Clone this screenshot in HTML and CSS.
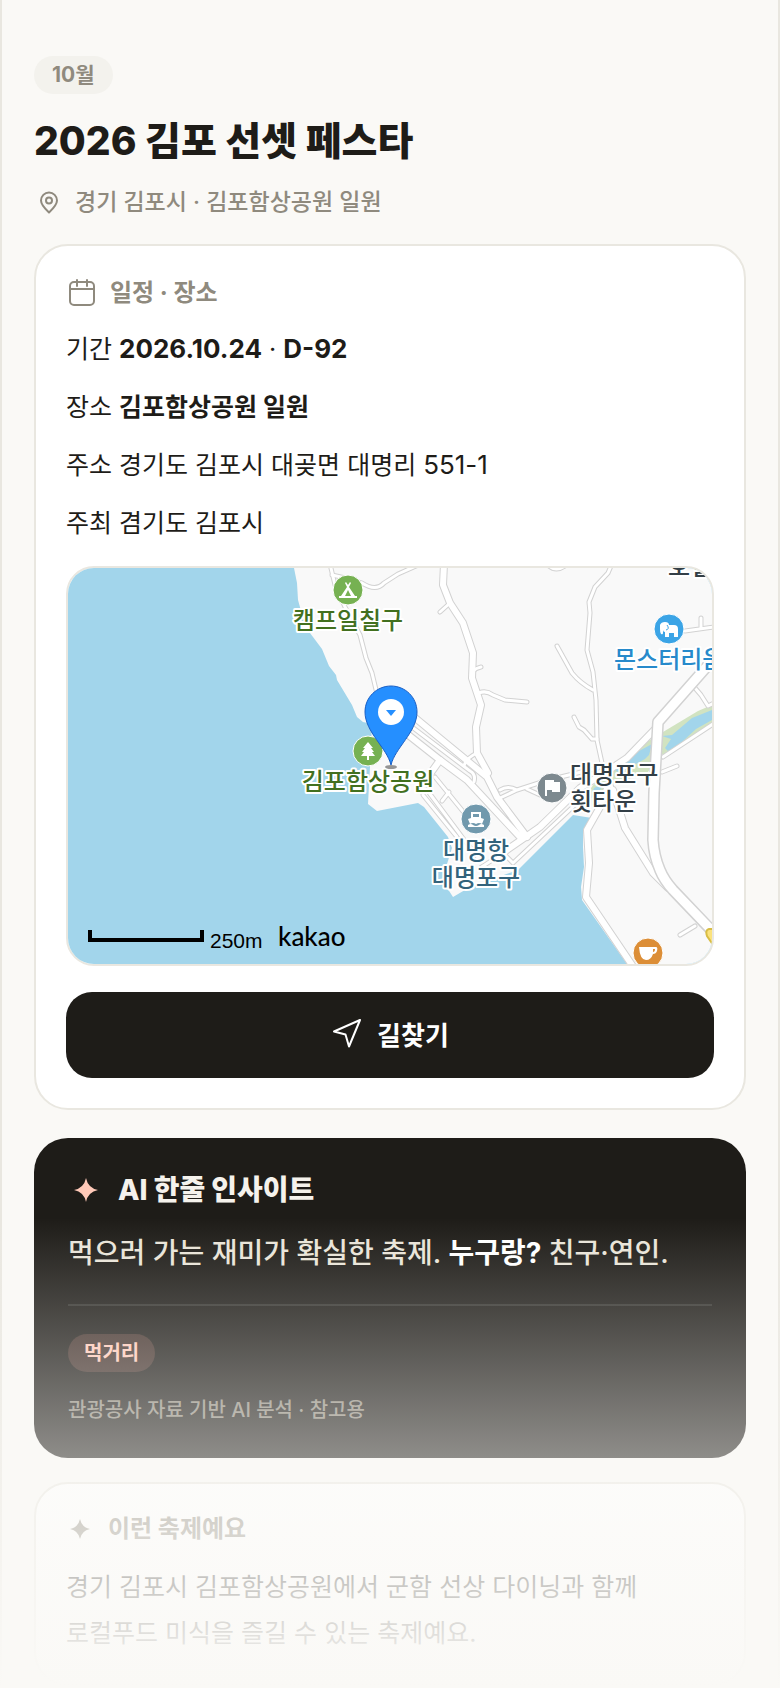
FILE: index.html
```html
<!DOCTYPE html>
<html lang="ko">
<head>
<meta charset="UTF-8" />
<meta name="viewport" content="width=device-width, initial-scale=1" />
<title>2026 김포 선셋 페스타</title>
<link rel="stylesheet" href="styles.css">
</head>
<body>
<main class="page">
  <header class="page-header">
    <span class="month">10월</span>
    <h1>2026 김포 선셋 페스타</h1>
    <p class="location">
      <svg class="icon-pin" viewBox="0 0 24 24" aria-hidden="true"><path d="M12 22.500C8 18.700 4 15 4 10.500a8 8 0 0 1 16 0c0 4.500-4 8.200-8 12z"/><circle cx="12" cy="10.500" r="3"/></svg>
      <span>경기 김포시 · 김포함상공원 일원</span>
    </p>
  </header>

  <section class="card schedule">
    <h2 class="card-title">
      <svg class="icon-calendar" viewBox="0 0 32 32" aria-hidden="true"><rect x="4" y="5" width="24" height="23" rx="4"/><path d="M4 12h24M11 3v6M21 3v6"/></svg>
      일정 · 장소
    </h2>
    <ul class="facts">
      <li>기간 <b class="num">2026.10.24</b> · <b class="num">D-92</b></li>
      <li>장소 <b>김포함상공원 일원</b></li>
      <li>주소 경기도 김포시 대곶면 대명리 <span class="num">551-1</span></li>
      <li>주최 겸기도 김포시</li>
    </ul>

    <div class="map">
      <svg viewBox="0 0 644 396" preserveAspectRatio="xMidYMid slice" role="img" aria-label="김포함상공원 지도">
        <defs>
          <g id="lanes">
            <path d="M262 -4L267 17L277 39L292 67L298 90L304 105L310 130"/>
            <path d="M264 7Q280 10 294 15Q308 24 316 15L330 6L348 -2"/>
            <path d="M382 35L372 44M405 103Q408 100 413 99M411 125Q418 122 425 127L437 132L459 134"/>
            <path d="M409 185Q398 190 396 198"/>
            <path d="M543 -2L540 5L527 19L521 34L522 45L519 82L525 104L528 132L529 172L534 195L545 222"/>
            <path d="M489 78L504 105Q512 115 525 122M506 149L511 159L516 162L524 171H529"/>
            <path d="M481 -2Q488 4 497 -2M617 63L646 59M633 50V60M627 120L633 127L640 138L648 134"/>
            <path d="M594 204L609 198M612 367L627 358M595 189L648 154"/>
            <path d="M432 222Q440 217 449 222L432 230M449 222L480 212L530 200M459 221L472 227"/>
            <path d="M359 222L394 269L412 292M367 209L402 252M374 233L381 224M355 227L389 269"/>
            <path d="M344 159L402 203Q408 206 406 214"/>
            <path d="M445 295L509 235M430 280L445 295M412 300L440 282"/>
          </g>
          <g id="streets">
            <path d="M376 -4L375 17L382 35L395 55L405 85L404 110L413 137L408 159L409 185L420 205"/>
            <path d="M340 144L374 172L419 209L429 229L459 269M334 162L372 192L399 212L452 269"/>
            <path d="M372 192L362 206"/>
            <path d="M436 284L472 259L512 220L535 206L559 190L590 158"/>
            <path d="M545 222L557 260L585 305L600 320"/>
            <path d="M540 218L532 239L519 262L521 295L518 329L566 400"/>
          </g>
          <path id="highway" d="M660 75L642 95L590 154L586 225L585 272Q586 288 592 302Q596 312 605 322L648 367"/>
        </defs>

        <rect class="water" width="644" height="396"/>
        <path class="land" d="M226 0L229 15L230 32L235 50L242 65L254 81L261 98L268 107L269 112L284 137L289 149L295 154L304 156L302 199L300 236L309 243L350 235L356 239L380 269L384 280L374 312L385 329L402 319L450 302L505 247L524 250L515 262V279L516 299L513 319L514 332L559 396H644V0Z"/>
        <path class="park" d="M644 137L630 143L595 164L559 186L535 204L523 220L524 240L532 232L540 218L580 204L590 188L606 183L644 158Z"/>
        <path class="stream" d="M644 142L624 150L604 167L594 168L603 171L597 180L600 183L614 174L628 161L644 152Z"/>
        <path class="stream" d="M584 176L571 183L556 195L546 201L551 205L562 199L577 191L581 187ZM535 216L526 220L523 230L530 226Z"/>

        <use href="#lanes" class="lanes casing"/>
        <use href="#streets" class="streets casing"/>
        <use href="#lanes" class="lanes"/>
        <use href="#streets" class="streets"/>
        <use href="#highway" class="highway casing"/>
        <use href="#highway" class="highway"/>

        <!-- camp site -->
        <g class="poi" transform="translate(280 22)">
          <circle class="green" r="15"/>
          <path d="M-2 -8L0 -5L2 -8L3 -7L1 -3L7 6H9V8H-9V6H-7L-1 -3L-3 -7ZM0 0L-3 6H3Z" fill-rule="evenodd"/>
        </g>
        <text class="label green-text" x="280" y="61">캠프일칠구</text>

        <!-- park -->
        <g class="poi" transform="translate(300 183)">
          <circle class="green" r="15"/>
          <path d="M0 -9L5 -3H3L6 1H4L7 5H1V9H-1V5H-7L-4 1H-6L-3 -3H-5Z"/>
        </g>
        <text class="label green-text" x="300" y="222">김포함상공원</text>

        <!-- harbour -->
        <g class="poi" transform="translate(408 251)">
          <circle class="steel" r="15"/>
          <path d="M-5 -7H5V-1L8 0L6 5Q3 3 0 5Q-3 3 -6 5L-8 0L-5 -1ZM-3 -5V-2H3V-5Z" fill-rule="evenodd"/>
          <path d="M-8 6Q-5 4 -3 6Q0 8 3 6Q5 4 8 6V8H-8Z"/>
        </g>
        <text class="label steel-text" x="408" y="291">대명항</text>
        <text class="label steel-text" x="408" y="318">대명포구</text>

        <!-- fish market -->
        <g class="poi" transform="translate(484 220)">
          <circle class="gray" r="15"/>
          <path d="M-7 -8H2V-6H8V4H0V2H-5V8H-7Z"/>
        </g>
        <text class="label dark-text start" x="502" y="215">대명포구</text>
        <text class="label dark-text start" x="502" y="242">횟타운</text>

        <!-- zoo -->
        <g class="poi" transform="translate(601 61)">
          <circle class="blue" r="15"/>
          <path d="M-9 -4Q-8 -7 -4 -7Q0 -7 0 -4H5Q9 -4 9 0V8H5V4H0V8H-4V3Q-6 3 -6 1V4Q-6 6 -8 5Q-9 4 -9 0Z"/>
          <path class="ear" d="M-2 -4Q1 0 -3 1"/>
        </g>
        <text class="label blue-text start" x="546" y="100">몬스터리움</text>
        <text class="label dark-text start" x="600" y="7">호텔</text>

        <!-- cafe -->
        <g class="poi" transform="translate(580 385)">
          <circle class="orange" r="15"/>
          <path d="M-9 -6H8Q10 -6 9 -2Q8 1 5 1Q3 7 -2 7Q-8 7 -9 -6ZM5 -4V-1Q7 -1 7 -4Z" fill-rule="evenodd"/>
        </g>
        <path class="bus" d="M646 361H641Q637 362 639 368L646 378Z"/>

        <!-- venue marker -->
        <ellipse class="marker-shadow" cx="323" cy="199" rx="6" ry="2"/>
        <path class="marker" d="M323 197C319 180 297 164 297 144C297 129 309 118 323 118S349 129 349 144C349 164 327 180 323 197Z"/>
        <circle cx="323" cy="144" r="13" fill="#fff"/>
        <path d="M318 142H328L323 148Z" fill="#258fff"/>

        <path class="scale-bar" d="M22 362V372H134V362"/>
        <text class="scale-text" x="142" y="380">250m</text>
        <text class="brand" x="210" y="378">kakao</text>
      </svg>
    </div>

    <button class="route-btn" type="button">
      <svg class="icon-route" viewBox="0 0 32 32" aria-hidden="true"><path d="M29 3L3 14.500l11.500 3 3.500 12z"/></svg>
      길찾기
    </button>
  </section>

  <section class="insight">
    <h2 class="insight-title">
      <svg class="icon-spark" viewBox="0 0 24 24" aria-hidden="true"><path d="M12 0Q14 10 24 12Q14 14 12 24Q10 14 0 12Q10 10 12 0z"/></svg>
      AI 한줄 인사이트
    </h2>
    <p class="insight-text">먹으러 가는 재미가 확실한 축제. <b>누구랑?</b> 친구·연인.</p>
    <div class="insight-tags"><span class="tag">먹거리</span></div>
    <p class="insight-note">관광공사 자료 기반 AI 분석 · 참고용</p>
  </section>

  <section class="card about">
    <h2 class="card-title">
      <svg class="icon-spark" viewBox="0 0 24 24" aria-hidden="true"><path d="M12 0Q14 10 24 12Q14 14 12 24Q10 14 0 12Q10 10 12 0z"/></svg>
      이런 축제예요
    </h2>
    <p class="about-text">경기 김포시 김포함상공원에서 군함 선상 다이닝과 함께 로컬푸드 미식을 즐길 수 있는 축제예요.</p>
  </section>

  <div class="fade"></div>
</main>
</body>
</html>
```

FILE: styles.css
```css
* {
  box-sizing: border-box;
}
body {
  margin: 0;
  background: #faf9f6;
  color: #1e1c18;
  font-family: Inter, "Noto Sans CJK KR", sans-serif;
  word-break: keep-all;
}
h1, h2, p, ul {
  margin: 0;
  padding: 0;
}
.page {
  position: relative;
  min-height: 100vh;
  padding: 56px 32px 2px;
  border-left: 2px solid #e9e7e0;
  border-right: 2px solid #e9e7e0;
}
.page-header {
  display: flex;
  flex-direction: column;
  align-items: flex-start;
}
.month {
  padding: 0 18px;
  border-radius: 19px;
  background: #f3f2ed;
  color: #8f8a7e;
  font-size: 21px;
  line-height: 38px;
  font-weight: 700;
}
h1 {
  margin-top: 21px;
  font-size: 39px;
  line-height: 52px;
  font-weight: 800;
}
.location {
  display: flex;
  align-items: center;
  gap: 14px;
  margin: 18px 0 25px 3px;
  color: #8f8a7e;
  font-size: 23px;
  line-height: 34px;
  font-weight: 500;
}
svg {
  flex: none;
}
.icon-pin,
.icon-calendar,
.icon-route {
  fill: none;
  stroke: currentColor;
  stroke-width: 2;
  stroke-linecap: round;
  stroke-linejoin: round;
}
.icon-pin {
  width: 24px;
  height: 24px;
}
.icon-calendar,
.icon-route {
  width: 32px;
  height: 32px;
}
.icon-spark {
  width: 24px;
  height: 24px;
  fill: currentColor;
}

/* cards */
.card {
  padding: 30px;
  border: 2px solid #e9e7e0;
  border-radius: 34px;
  background: #fff;
}
.card-title {
  display: flex;
  align-items: center;
  gap: 12px;
  color: #8f8a7e;
  font-size: 24px;
  line-height: 34px;
  font-weight: 700;
}
.facts {
  list-style: none;
  margin: 10px 0 14px;
  font-size: 25px;
  line-height: 58px;
}
.num {
  font-size: 26px;
}

/* map */
.map {
  height: 400px;
  border: 2px solid #e9e7e0;
  border-radius: 28px;
  overflow: hidden;
}
.map svg {
  display: block;
  width: 100%;
  height: 100%;
}
.water { fill: #a2d5eb; }
.land { fill: #f9f9f9; }
.park { fill: #d1e3c1; }
.stream { fill: #a2d5eb; }
.lanes,
.streets,
.highway {
  fill: none;
  stroke: #fff;
  stroke-linecap: round;
  stroke-linejoin: round;
}
.lanes { stroke-width: 3px; }
.lanes.casing { stroke-width: 5px; }
.streets { stroke-width: 6px; }
.streets.casing { stroke-width: 8px; }
.highway { stroke-width: 9px; }
.highway.casing { stroke-width: 12px; }
.casing { stroke: #d2d2d2; }
.poi circle {
  stroke: #fff;
  stroke-width: 1px;
}
.poi path { fill: #fff; }
.poi .ear {
  fill: none;
  stroke: #3ba4e6;
}
.poi .green { fill: #76b152; }
.poi .steel { fill: #7199ad; }
.poi .gray { fill: #7d898f; }
.poi .blue { fill: #3ba4e6; }
.poi .orange { fill: #dc8e37; }
.label {
  font-size: 24px;
  font-weight: 500;
  text-anchor: middle;
  stroke: #fff;
  stroke-width: 4px;
  stroke-linejoin: round;
  paint-order: stroke;
}
.start { text-anchor: start; }
.green-text { fill: #42701f; }
.steel-text { fill: #33637c; }
.dark-text { fill: #333f47; }
.blue-text { fill: #278acb; }
.bus {
  fill: #fbe27c;
  stroke: #d8bd45;
  stroke-width: 2px;
}
.marker {
  fill: #258fff;
  stroke: #1a5fc4;
}
.marker-shadow { fill: rgba(0,0,0,0.4); }
.scale-bar {
  fill: none;
  stroke: #000;
  stroke-width: 4px;
}
.scale-text {
  font-family: "Liberation Sans", sans-serif;
  font-size: 21px;
}
.brand {
  font-family: Lato, sans-serif;
  font-size: 26px;
  font-weight: 500;
}

.route-btn {
  display: flex;
  align-items: center;
  justify-content: center;
  gap: 14px;
  width: 100%;
  height: 86px;
  margin-top: 26px;
  padding: 0 0 4px;
  border: none;
  border-radius: 26px;
  background: #1e1c18;
  color: #fff;
  font-family: inherit;
  font-size: 26px;
  font-weight: 700;
  cursor: pointer;
}

/* AI insight */
.insight {
  margin: 28px 0 24px;
  padding: 34px;
  border-radius: 34px;
  background: #1e1c18;
}
.insight-title {
  display: flex;
  align-items: center;
  gap: 20px;
  padding-left: 6px;
  color: #f5f2ec;
  font-size: 28px;
  line-height: 36px;
  font-weight: 800;
}
.insight-title .icon-spark {
  color: #ffc9b8;
}
.insight-text {
  margin-top: 22px;
  padding-bottom: 28px;
  border-bottom: 2px solid rgba(255,255,255,0.1);
  color: #e9e4d8;
  font-size: 28px;
  line-height: 46px;
  font-weight: 500;
}
.insight-text b {
  color: #fff;
}
.insight-tags {
  display: flex;
  margin-top: 28px;
}
.tag {
  padding: 0 16px;
  border-radius: 19px;
  background: rgba(255,160,140,0.16);
  color: #ffc9b8;
  font-size: 20px;
  line-height: 38px;
  font-weight: 700;
}
.insight-note {
  margin-top: 24px;
  color: #8f8a7e;
  font-size: 20px;
  line-height: 28px;
  font-weight: 500;
}

.about {
  padding: 28px 30px;
}
.about .icon-spark {
  width: 20px;
  height: 20px;
  margin: 0 6px 0 4px;
}
.about-text {
  margin-top: 18px;
  font-size: 25px;
  line-height: 46px;
}

/* page dissolves into the background at the bottom */
.fade {
  position: absolute;
  left: -2px;
  right: -2px;
  bottom: 0;
  height: 470px;
  background: linear-gradient(rgba(250,249,246,0), #faf9f6);
  pointer-events: none;
}
```
